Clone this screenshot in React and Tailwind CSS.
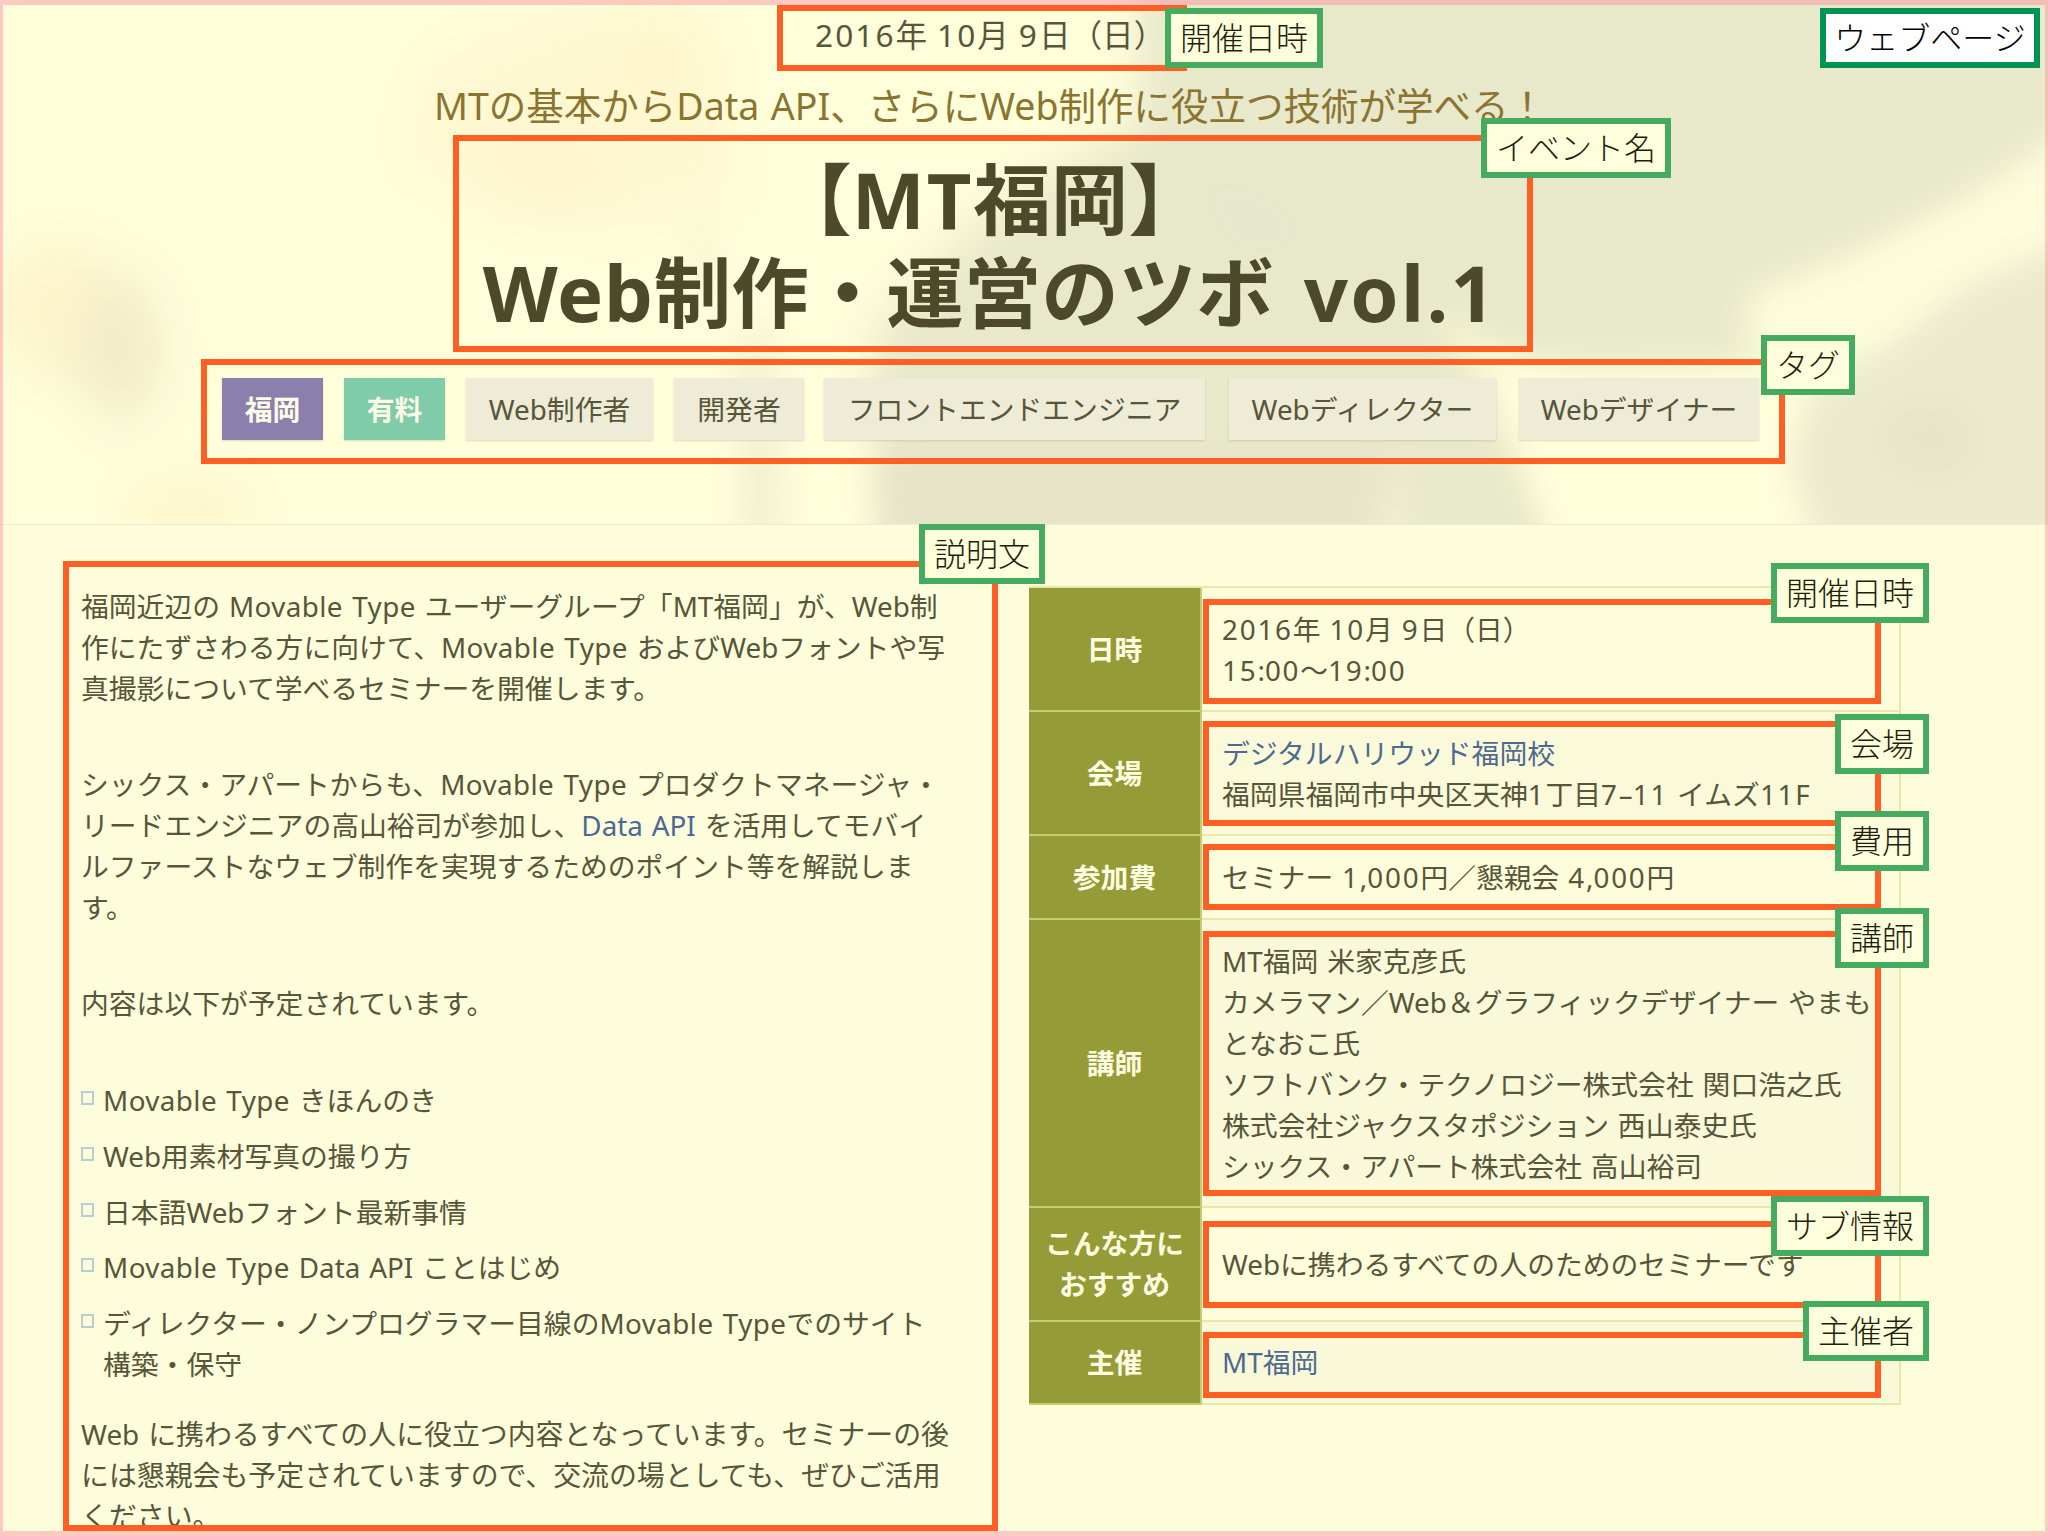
const tags = [
  { label: '福岡', className: 'w-[101px] bg-[#8b7fae] text-[#fdfbe6] font-bold' },
  { label: '有料', className: 'ml-[21px] w-[101px] bg-[#80ccaa] text-[#fdfbe6] font-bold' },
  { label: 'Web制作者', className: 'ml-[21px] w-[187px] bg-[#eeecd6]' },
  { label: '開発者', className: 'ml-[21px] w-[130px] bg-[#eeecd6]' },
  { label: 'フロントエンドエンジニア', className: 'ml-[20px] w-[381px] bg-[#eeecd6]' },
  { label: 'Webディレクター', className: 'ml-[24px] w-[267px] bg-[#eeecd6]' },
  { label: 'Webデザイナー', className: 'ml-[23px] w-[240px] bg-[#eeecd6]' },
];

const topics = [
  ['Movable Type きほんのき'],
  ['Web用素材写真の撮り方'],
  ['日本語Webフォント最新事情'],
  ['Movable Type Data API ことはじめ'],
  ['ディレクター・ノンプログラマー目線のMovable Typeでのサイト', '構築・保守'],
];

const rows = [
  {
    head: ['日時'],
    label: '開催日時',
    lines: ['2016年 10月 9日（日）', '15:00〜19:00'],
    row: 'h-[124px]',
    box: 'mt-[11px] h-[105px] pt-1',
    tag: '-top-[42px] w-[158px]',
  },
  {
    head: ['会場'],
    label: '会場',
    link: 'デジタルハリウッド福岡校',
    lines: ['福岡県福岡市中央区天神1丁目7–11 イムズ11F'],
    row: 'h-[124px] bg-[#fafada]',
    box: 'mt-[9px] h-[105px] pt-[6px]',
    tag: '-top-[13px] w-[94px]',
  },
  {
    head: ['参加費'],
    label: '費用',
    lines: ['セミナー 1,000円／懇親会 4,000円'],
    row: 'h-[84px]',
    box: 'mt-[8px] h-[66px] pt-[7px]',
    tag: '-top-[39px] w-[94px]',
  },
  {
    head: ['講師'],
    label: '講師',
    lines: [
      'MT福岡 米家克彦氏',
      'カメラマン／Web＆グラフィックデザイナー やまも',
      'となおこ氏',
      'ソフトバンク・テクノロジー株式会社 関口浩之氏',
      '株式会社ジャクスタポジション 西山泰史氏',
      'シックス・アパート株式会社 高山裕司',
    ],
    row: 'h-[288px] bg-[#f9f9d9]',
    box: 'mt-[11px] h-[265px] pt-[4px]',
    tag: '-top-[29px] w-[94px]',
  },
  {
    head: ['こんな方に', 'おすすめ'],
    label: 'サブ情報',
    lines: ['Webに携わるすべての人のためのセミナーです'],
    row: 'h-[114px]',
    box: 'mt-[13px] h-[87px] pt-[17px]',
    tag: '-top-[31px] w-[158px]',
  },
  {
    head: ['主催'],
    label: '主催者',
    link: 'MT福岡',
    lines: [],
    row: 'h-[83px] bg-[#f9f8d9]',
    box: 'mt-[10px] h-[66px] pt-[4px]',
    tag: '-top-[37px] w-[126px]',
  },
];

// Green caption pinned to the corner of an orange frame
const Caption = ({ className, children }) => (
  <span
    className={`absolute z-10 flex h-[60px] items-center justify-center border-6 border-[#45ab5e] bg-[#fefedc] text-[32px] leading-none font-light whitespace-nowrap ${className}`}
  >
    {children}
  </span>
);

const Frame = ({ label, labelClass, className, children }) => (
  <div className={`relative border-6 border-[#ff5f22] ${className}`}>
    {children}
    <Caption className={`text-[#1f1e0c] ${labelClass}`}>{label}</Caption>
  </div>
);

// Digits and "Movable Type" are set a little looser than the rest
const spaced = (text) =>
  text.split(/(\d+|Movable Type)/).map((part, i) => {
    if (i % 2 === 0) return part;
    return (
      <span key={i} className={part === 'Movable Type' ? 'tracking-[0.015em]' : 'tracking-[0.065em]'}>
        {part}
      </span>
    );
  });

const Line = ({ children }) => <div className="whitespace-nowrap">{spaced(children)}</div>;

const HeroBackdrop = () => (
  <svg className="absolute inset-0 h-full w-full" viewBox="0 0 2048 525" preserveAspectRatio="none">
    <defs>
      <filter id="soft" x="-20%" y="-20%" width="140%" height="140%">
        <feGaussianBlur stdDeviation="16" />
      </filter>
      <filter id="softer" x="-50%" y="-50%" width="200%" height="200%">
        <feGaussianBlur stdDeviation="26" />
      </filter>
    </defs>
    <rect width="2048" height="525" fill="#fefedb" />
    <g filter="url(#softer)">
      <path d="M430 60L560 0L720 30L740 200L640 230L520 220L440 180L400 160Z" fill="#fef8d2" />
      <ellipse cx="540" cy="180" rx="70" ry="40" fill="#fef5ce" />
      <ellipse cx="60" cy="310" rx="70" ry="70" fill="#fdf5cc" />
      <ellipse cx="120" cy="350" rx="42" ry="75" fill="#f2ebc9" />
      <ellipse cx="190" cy="510" rx="70" ry="30" fill="#fdf5ca" />
      <ellipse cx="660" cy="60" rx="60" ry="60" fill="#fef7cd" />
      <path d="M1140 -60H1240V560H900L870 340L960 240L1060 170L1150 120Z" fill="#e8e8cb" />
    </g>
    <g filter="url(#soft)">
      <path d="M1155 -60H2110V600H900L885 400L920 320L1010 250L1100 190L1155 150Z" fill="#e8e8cb" />
      <path d="M880 450H1400L1330 600H880Z" fill="#e7e4c8" />
      <path d="M735 330H775L790 600H740Z" fill="#f3f3d2" />
      <path d="M690 190L720 290L700 300Z" fill="#f3ebca" />
      <path d="M1770 300L1870 255L1960 220L2110 190V600H1800Z" fill="#ebeacd" />
      <path d="M2110 95L2040 150L1960 200L1850 255L1750 295L1745 350L1870 360L1915 325L1970 285L2110 225Z" fill="#fdfcdb" />
      <path d="M1430 312L1500 355L1590 368L1780 362L1860 355L1805 400L1790 470L1835 600H1570L1520 470L1490 390Z" fill="#fefedb" />
      <ellipse cx="1930" cy="440" rx="45" ry="35" fill="#e7e4c8" />
      <path d="M1200 180L1300 235L1250 240Z" fill="#e2e8cf" />
      <path d="M1395 440L1420 600H1370Z" fill="#f2f1d3" />
    </g>
  </svg>
);

const Hero = () => (
  <header className="relative h-[525px] overflow-hidden border-b border-[#eeedcc]">
    <HeroBackdrop />
    <div className="relative pt-[5px]">
      <Frame
        label="開催日時"
        labelClass="-top-[3px] left-[382px] w-[158px]"
        className="ml-[777px] h-[66px] w-[410px] pl-8"
      >
        <div className="-mt-[1px] text-[31.6px] leading-[50px] whitespace-nowrap">
          {spaced('2016年 10月 9日（日）')}
        </div>
      </Frame>
      <p className="ml-[434px] h-[64px] text-[37.5px] leading-[70px] whitespace-nowrap text-[#8b7430]">
        MTの基本からData API、さらにWeb制作に役立つ技術が学べる！
      </p>
      <Frame
        label="イベント名"
        labelClass="-top-[23px] left-[1022px] w-[190px]"
        className="ml-[453px] h-[217px] w-[1080px] pt-[12px] text-center text-[77.5px] leading-[93px] text-[#4c4a2a]"
      >
        <h1 className="-ml-[6px] font-bold whitespace-nowrap">
          【<span className="tracking-[0.025em]">MT</span>福岡】
          <br />
          <span className="tracking-[0.01em]">Web</span>制作・運営のツボ{' '}
          <span className="ml-2 tracking-[0.03em]">vol.1</span>
        </h1>
      </Frame>
      <Frame
        label="タグ"
        labelClass="-top-[30px] left-[1554px] w-[94px]"
        className="mt-[7px] ml-[201px] flex h-[105px] w-[1584px] pt-[13px] pl-[15px]"
      >
        {tags.map((tag) => (
          <span
            key={tag.label}
            className={`flex h-[62px] shrink-0 items-center justify-center whitespace-nowrap shadow-[0_1px_2px_rgba(120,120,80,0.25)] ${tag.className}`}
          >
            {tag.label}
          </span>
        ))}
      </Frame>
    </div>
    <Caption className="top-[8px] right-[8px] w-[220px] border-[#009452]! bg-white! text-black">ウェブページ</Caption>
  </header>
);

const Description = () => (
  <Frame
    label="説明文"
    labelClass="-top-[43px] left-[850px] w-[126px]"
    className="mt-[36px] ml-[63px] h-[970px] w-[935px]"
  >
    <div className="h-full overflow-hidden pt-[19px] pl-[12px]">
      <div>
        <Line>福岡近辺の Movable Type ユーザーグループ「MT福岡」が、Web制</Line>
        <Line>作にたずさわる方に向けて、Movable Type およびWebフォントや写</Line>
        <Line>真撮影について学べるセミナーを開催します。</Line>
      </div>
      <div className="mt-[55px]">
        <Line>シックス・アパートからも、Movable Type プロダクトマネージャ・</Line>
        <div className="whitespace-nowrap">
          リードエンジニアの高山裕司が参加し、<a className="text-[#4d6796]">Data API</a> を活用してモバイ
        </div>
        <Line>ルファーストなウェブ制作を実現するためのポイント等を解説しま</Line>
        <Line>す。</Line>
      </div>
      <p className="mt-[55px]">内容は以下が予定されています。</p>
      <ul className="mt-[56px] flex flex-col gap-[14.8px]">
        {topics.map((lines) => (
          <li key={lines[0]} className="flex">
            <span className="mt-[11px] mr-[9px] h-[14px] w-[13px] shrink-0 border-2 border-[#b5d0cf]" />
            <div>
              {lines.map((line) => (
                <Line key={line}>{line}</Line>
              ))}
            </div>
          </li>
        ))}
      </ul>
      <div className="mt-[29px] text-[27.9px]">
        <Line>Web に携わるすべての人に役立つ内容となっています。セミナーの後</Line>
        <Line>には懇親会も予定されていますので、交流の場としても、ぜひご活用</Line>
        <Line>ください。</Line>
      </div>
    </div>
  </Frame>
);

const EventTable = () => (
  <div className="mt-[61px] ml-[31px] w-[872px] border-t-2 border-r-2 border-[#e6e9a8]">
    {rows.map((row) => (
      <div key={row.label} className={`flex border-b-2 border-[#e6e9a8] ${row.row}`}>
        <div className="-mb-[2px] flex w-[173px] shrink-0 flex-col justify-center border-r-2 border-b-2 border-[#c3cc72] bg-[#949b37] text-center font-bold text-[#fdfde0]">
          {row.head.map((line) => (
            <Line key={line}>{line}</Line>
          ))}
        </div>
        <Frame
          label={row.label}
          labelClass={`-right-[54px] ${row.tag}`}
          className={`ml-px w-[678px] shrink-0 pl-[13px] ${row.box}`}
        >
          {row.link && <a className="block text-[#4f6a90]">{row.link}</a>}
          {row.lines.map((line) => (
            <Line key={line}>{line}</Line>
          ))}
        </Frame>
      </div>
    ))}
  </div>
);

export default function App() {
  return (
    <div className="relative h-[1536px] w-[2048px] overflow-hidden bg-[#fefddb] font-['Noto_Sans','Noto_Sans_CJK_JP',sans-serif] text-[27.8px] leading-[41px] text-[#57563a] [word-spacing:0.06em]">
      <Hero />
      <main className="flex items-start">
        <Description />
        <EventTable />
      </main>
      <div className="pointer-events-none absolute inset-0 border-x-3 border-y-5 border-[#fa8ca0]/45" />
    </div>
  );
}
